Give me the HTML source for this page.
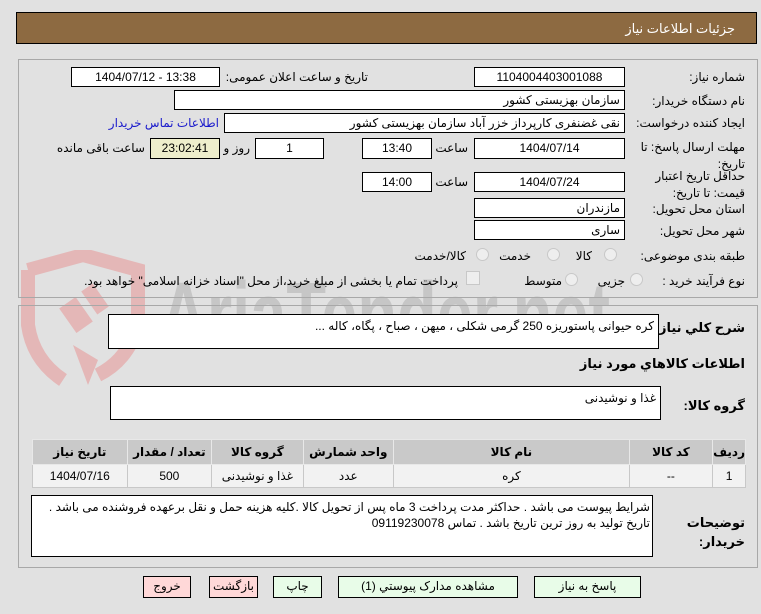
<!DOCTYPE html>
<html><head><meta charset="utf-8"><style>
body{margin:0;width:761px;height:614px;background:#e1e1e1;font-family:"Liberation Sans","DejaVu Sans",sans-serif;font-size:12px;color:#000;position:relative;overflow:hidden}
.a{position:absolute;white-space:nowrap}
.l{position:absolute;white-space:nowrap;direction:rtl;text-align:right}
.b{position:absolute;background:#fff;border:1px solid #000;box-sizing:border-box;text-align:center;line-height:18px;white-space:nowrap}
.br{text-align:right;direction:rtl;padding-right:4px}
.panel{position:absolute;border:1px solid #a8a8a8;box-sizing:border-box}
.rad{position:absolute;width:13px;height:13px;border-radius:50%;border:1px solid #c8c8c8;background:#eee;box-sizing:border-box}
.btn{position:absolute;border:1px solid #000;box-sizing:border-box;text-align:center;line-height:19px;height:22px;direction:rtl}
table{position:absolute;border-collapse:collapse;left:32px;top:439px;width:714px}
td{border:1px solid #c8c8c8;text-align:center;height:22px;padding:0;direction:rtl}
th{background:#c9c9c9;border:1px solid #e8e8e8;height:24px;font-weight:bold;padding:0;direction:rtl}
.bold{font-weight:bold;font-size:13px}
.ta{position:absolute;background:#fff;border:1px solid #000;box-sizing:border-box;direction:rtl;text-align:right;padding:4px 4px}
</style></head><body>
<div class="a" style="left:16px;top:12px;width:741px;height:32px;background:#8d6a41;border:1px solid #000;box-sizing:border-box"></div>
<div class="l" style="right:26px;top:21px;color:#fff;font-size:13px">جزئیات اطلاعات نیاز</div>

<!-- watermark -->
<svg class="a" style="left:18px;top:250px" width="130" height="140" viewBox="0 0 130 140"><path d="M10 20 L65 5 L120 20 L120 75 Q110 110 80 125" fill="none" stroke="#e4b7b7" stroke-width="14"/><path d="M10 20 L10 75 Q15 110 45 130" fill="none" stroke="#e4b7b7" stroke-width="14"/><rect x="48" y="50" width="20" height="30" fill="#e4b7b7" transform="rotate(-35 58 65)"/><rect x="70" y="35" width="14" height="28" fill="#e4b7b7" transform="rotate(-35 77 49)"/><path d="M55 95 L70 135 L80 110 Z" fill="#e4b7b7"/></svg>
<svg class="a" style="left:160px;top:265px" width="460" height="90"><text x="0" y="80" font-family="Liberation Sans" font-weight="bold" font-size="90" fill="#c6c6c6" textLength="450" lengthAdjust="spacingAndGlyphs">AriaTender.net</text></svg>

<div class="panel" style="left:18px;top:59px;width:740px;height:239px"></div>
<div class="l" style="right:16px;top:70px">شماره نیاز:</div>
<div class="b" style="left:474px;top:67px;width:151px;height:20px">1104004403001088</div>
<div class="l" style="right:393px;top:70px">تاریخ و ساعت اعلان عمومی:</div>
<div class="b" style="left:71px;top:67px;width:149px;height:20px">1404/07/12 - 13:38</div>

<div class="l" style="right:16px;top:94px">نام دستگاه خریدار:</div>
<div class="b br" style="left:174px;top:90px;width:451px;height:20px">سازمان بهزیستی کشور</div>

<div class="l" style="right:16px;top:116px">ایجاد کننده درخواست:</div>
<div class="b br" style="left:224px;top:113px;width:401px;height:20px">نقی غضنفری کارپرداز خزر آباد سازمان بهزیستی کشور</div>
<div class="l" style="right:542px;top:116px;color:#1a1acc">اطلاعات تماس خریدار</div>

<div class="l" style="right:16px;top:139px;line-height:17px">مهلت ارسال پاسخ: تا<br>تاریخ:</div>
<div class="b" style="left:474px;top:138px;width:151px;height:21px">1404/07/14</div>
<div class="l" style="right:293px;top:141px">ساعت</div>
<div class="b" style="left:362px;top:138px;width:70px;height:21px">13:40</div>
<div class="b" style="left:255px;top:138px;width:69px;height:21px">1</div>
<div class="l" style="right:511px;top:141px">روز و</div>
<div class="b" style="left:150px;top:138px;width:70px;height:21px;background:#eeeecc">23:02:41</div>
<div class="l" style="right:616px;top:141px">ساعت باقی مانده</div>

<div class="l" style="right:16px;top:168px;line-height:17px">حداقل تاریخ اعتبار<br>قیمت: تا تاریخ:</div>
<div class="b" style="left:474px;top:172px;width:151px;height:20px">1404/07/24</div>
<div class="l" style="right:293px;top:175px">ساعت</div>
<div class="b" style="left:362px;top:172px;width:70px;height:20px">14:00</div>

<div class="l" style="right:16px;top:202px">استان محل تحویل:</div>
<div class="b br" style="left:474px;top:198px;width:151px;height:20px">مازندران</div>
<div class="l" style="right:16px;top:224px">شهر محل تحویل:</div>
<div class="b br" style="left:474px;top:220px;width:151px;height:20px">ساری</div>

<div class="l" style="right:16px;top:249px">طبقه بندی موضوعی:</div>
<div class="rad" style="left:604px;top:248px"></div><div class="l" style="right:169px;top:249px">کالا</div>
<div class="rad" style="left:547px;top:248px"></div><div class="l" style="right:230px;top:249px">خدمت</div>
<div class="rad" style="left:476px;top:248px"></div><div class="l" style="right:295px;top:249px">کالا/خدمت</div>

<div class="l" style="right:16px;top:274px">نوع فرآیند خرید :</div>
<div class="rad" style="left:630px;top:273px"></div><div class="l" style="right:136px;top:274px">جزیی</div>
<div class="rad" style="left:565px;top:273px"></div><div class="l" style="right:199px;top:274px">متوسط</div>
<div class="a" style="left:466px;top:271px;width:12px;height:12px;border:1px solid #c8c8c8;background:#eee"></div>
<div class="l" style="right:303px;top:274px">پرداخت تمام یا بخشی از مبلغ خرید،از محل "اسناد خزانه اسلامی" خواهد بود.</div>

<div class="panel" style="left:18px;top:305px;width:740px;height:263px"></div>
<div class="l bold" style="right:16px;top:320px">شرح کلي نیاز:</div>
<div class="ta" style="left:108px;top:314px;width:551px;height:35px">کره حیوانی پاستوریزه 250 گرمی شکلی ، میهن ، صباح ، پگاه، کاله ...</div>
<div class="l bold" style="right:16px;top:356px">اطلاعات کالاهاي مورد نیاز</div>
<div class="l bold" style="right:16px;top:398px">گروه کالا:</div>
<div class="ta" style="left:110px;top:386px;width:551px;height:34px">غذا و نوشیدنی</div>

<table><tr><th style="width:94px">تاریخ نیاز</th><th style="width:84px">تعداد / مقدار</th><th style="width:91px">گروه کالا</th><th style="width:90px">واحد شمارش</th><th style="width:237px">نام کالا</th><th style="width:83px">کد کالا</th><th>ردیف</th></tr>
<tr style="background:#f2f2f2"><td>1404/07/16</td><td>500</td><td>غذا و نوشیدنی</td><td>عدد</td><td>کره</td><td>--</td><td>1</td></tr></table>

<div class="ta" style="left:31px;top:495px;width:622px;height:62px;padding:3px 2px;line-height:16px;white-space:normal">شرایط پیوست می باشد . حداکثر مدت پرداخت 3 ماه پس از تحویل کالا .کلیه هزینه حمل و نقل برعهده فروشنده می باشد . تاریخ تولید به روز ترین تاریخ باشد . تماس 09119230078</div>
<div class="l bold" style="right:16px;top:513px;line-height:19px">توضیحات<br>خریدار:</div>

<div class="btn" style="left:534px;top:576px;width:107px;background:#e8fce8">پاسخ به نیاز</div>
<div class="btn" style="left:338px;top:576px;width:180px;background:#e8fce8">مشاهده مدارک پیوستي (1)</div>
<div class="btn" style="left:273px;top:576px;width:49px;background:#e8fce8">چاپ</div>
<div class="btn" style="left:209px;top:576px;width:49px;background:#ffd8d8">بازگشت</div>
<div class="btn" style="left:143px;top:576px;width:48px;background:#ffd8d8">خروج</div>
</body></html>
